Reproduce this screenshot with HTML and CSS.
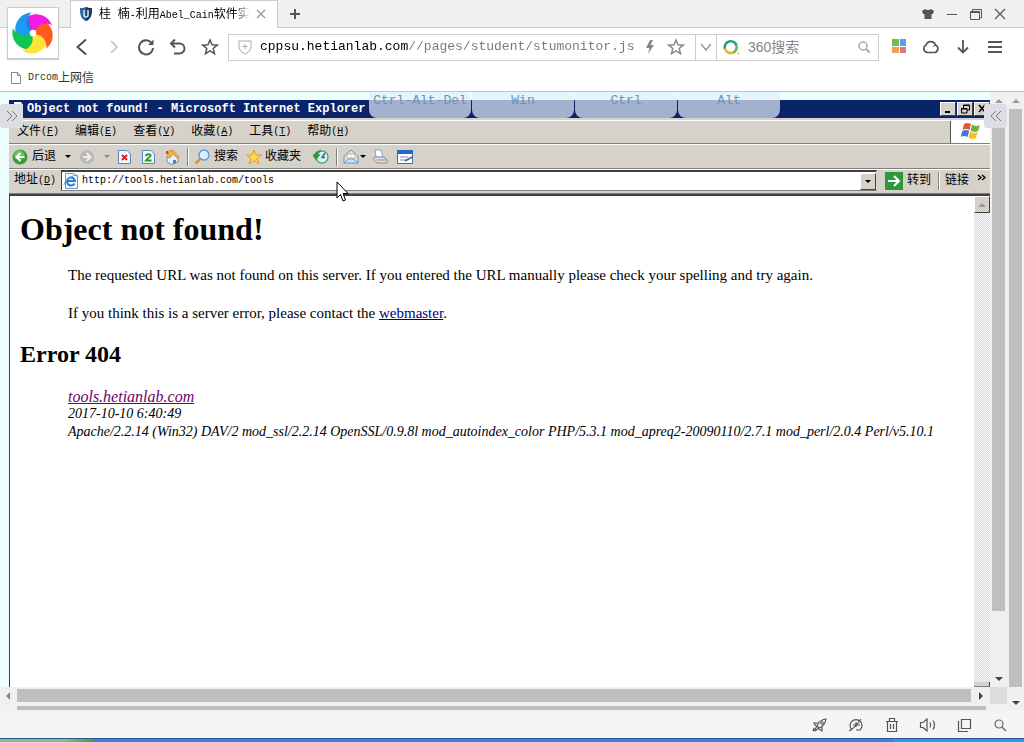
FILE: index.html
```html
<!DOCTYPE html>
<html lang="zh-CN">
<head>
<meta charset="utf-8">
<title>桂 楠-利用Abel_Cain软件实</title>
<link rel="stylesheet" href="styles.css">
</head>
<body>
<header class="chrome">
  <a class="brand" href="#" aria-label="主页">
    <svg viewBox="0 0 44 44" width="42" height="42">
      <defs><path id="petal" d="M22 22C14 17 12 8 18 4C26 0 38 3 42 14C37 11 28 12 25 19Z"/></defs>
      <use href="#petal" fill="#1c9cf0" transform="rotate(288 22 22)"/>
      <use href="#petal" fill="#10c552" transform="rotate(216 22 22)"/>
      <use href="#petal" fill="#ffe23a" transform="rotate(144 22 22)"/>
      <use href="#petal" fill="#ff5a1f" transform="rotate(72 22 22)"/>
      <use href="#petal" fill="#f01ce0"/>
      <path d="M22 22C14 17 12 8 18 4Q16 12 22 22Z" fill="#1c80e8"/>
      <circle cx="22" cy="22" r="3.500" fill="#fff"/>
    </svg>
  </a>
  <div class="tabs">
    <div class="tab">
      <svg viewBox="0 0 14 16" width="14" height="16"><path d="M7 1C5 2 3 2 1 2C1 9 2 13 7 15C12 13 13 9 13 2C11 2 9 2 7 1Z" fill="#2d6496"/><path d="M7 1C9 2 11 2 13 2C13 9 12 13 7 15Z" fill="#17395f"/><path d="M5 4V9Q5 11 7 11Q9 11 9 9V4" fill="none" stroke="#c8e2f4" stroke-width="1.6"/></svg>
      <span class="tab-title">桂&nbsp; 楠<span class="latin">-</span>利用<span class="latin">Abel_Cain</span>软件实</span>
      <button class="plain" aria-label="关闭标签"><svg viewBox="3 3 10 10" width="10" height="10"><path d="M4 4L12 12M12 4L4 12" stroke="#999" stroke-width="1.3"/></svg></button>
    </div>
    <button class="plain newtab" aria-label="新标签"><svg viewBox="0 0 16 16" width="16" height="16"><path d="M8 3V13M3 8H13" stroke="#555" stroke-width="2"/></svg></button>
    <div class="wincontrols">
      <button class="plain" aria-label="皮肤"><svg viewBox="0 0 16 16" width="16" height="16"><path d="M5 3Q8 5 11 3L14 5L13 8H11.500V13H4.500V8H3L2 5Z" fill="#555"/></svg></button>
      <button class="plain" aria-label="最小化"><svg viewBox="0 0 16 16" width="16" height="16"><path d="M3 8.500H13" stroke="#555"/></svg></button>
      <button class="plain" aria-label="还原"><svg viewBox="0 0 16 16" width="16" height="16"><path d="M4.500 5V3.500H13.500V12H12M2.500 5.500H11.500V13.500H2.500ZM2.500 6.500H11.500" fill="none" stroke="#555"/></svg></button>
      <button class="plain" aria-label="关闭"><svg viewBox="0 0 16 16" width="16" height="16"><path d="M3 3L13 13M13 3L3 13" stroke="#555" stroke-width="1.200"/></svg></button>
    </div>
  </div>
  <div class="navbar">
    <div class="navbuttons">
      <button class="plain" aria-label="后退"><svg viewBox="0 0 18 18" width="18" height="18"><path d="M13 1.500L4.500 9L13 16.500" fill="none" stroke="#444" stroke-width="1.800"/></svg></button>
      <button class="plain" aria-label="前进"><svg viewBox="0 0 18 18" width="18" height="18"><path d="M6 3L12 9L6 15" fill="none" stroke="#c4c4c4" stroke-width="1.600"/></svg></button>
      <button class="plain" aria-label="刷新"><svg viewBox="0 0 18 18" width="18" height="18"><path d="M14.500 5A7 7 0 1 0 16 10" fill="none" stroke="#555" stroke-width="2"/><path d="M16.500 1.500V7H11Z" fill="#555"/></svg></button>
      <button class="plain" aria-label="撤销"><svg viewBox="0 0 18 18" width="18" height="18"><path d="M6 1.500L2 5.500L6 9.500M2.500 5.500H10.500A5 5 0 0 1 10.500 15.500H5" fill="none" stroke="#555" stroke-width="2"/></svg></button>
      <button class="plain" aria-label="收藏"><svg viewBox="0 0 18 18" width="18" height="18"><path d="M9 2L11 6.800L16.200 7.200L12.200 10.500L13.500 15.600L9 12.800L4.500 15.600L5.800 10.500L1.800 7.200L7 6.800Z" fill="none" stroke="#555" stroke-width="1.500"/></svg></button>
    </div>
    <div class="omnibox">
      <svg viewBox="0 0 14 16" width="14" height="16"><path d="M1 2H13V9Q12 13 7 15Q2 13 1 9Z" fill="none" stroke="#aaa"/><path d="M7 5V10M4.500 7.500H9.500" stroke="#aaa"/></svg>
      <input class="url" type="text" aria-label="网址" value="cppsu.hetianlab.com//pages/student/stumonitor.js">
      <svg viewBox="0 0 10 14" width="10" height="14"><path d="M5 0L1 8H4.500L3 14L9 5H5.500L8 0Z" fill="#888"/></svg>
      <button class="plain fav" aria-label="收藏网页"><svg viewBox="0 0 18 18" width="18" height="18"><path d="M9 2L11 6.800L16.200 7.200L12.200 10.500L13.500 15.600L9 12.800L4.500 15.600L5.800 10.500L1.800 7.200L7 6.800Z" fill="none" stroke="#888" stroke-width="1.500"/></svg></button>
      <button class="plain drop" aria-label="历史网址"><svg viewBox="0 0 14 14" width="14" height="14"><path d="M2 4L7 10L12 4" fill="none" stroke="#999" stroke-width="1.500"/></svg></button>
      <div class="search">
        <svg viewBox="0 0 17 16" width="17" height="16"><path d="M2 10A6 6 0 0 1 13.500 6.500" fill="none" stroke="#2e9e78" stroke-width="2.600"/><path d="M13.500 6.500A6 6 0 0 1 9 14" fill="none" stroke="#5cb85c" stroke-width="2.600"/><path d="M2 9.500A6 6 0 0 0 10.500 13.500" fill="none" stroke="#f0b030" stroke-width="2.600"/><circle cx="15.500" cy="14.500" r="1" fill="#f0b030"/></svg>
        <input type="text" aria-label="搜索" placeholder="360搜索">
        <button class="plain" aria-label="搜索"><svg viewBox="0 0 14 14" width="14" height="14"><circle cx="6" cy="6" r="4" fill="none" stroke="#aaa" stroke-width="1.500"/><path d="M9 9L12.500 12.500" stroke="#aaa" stroke-width="2"/></svg></button>
      </div>
    </div>
    <div class="tools">
      <button class="plain" aria-label="应用"><svg viewBox="0 0 16 16" width="16" height="16"><path d="M1 0H8V7H1Z" fill="#6fbf4a"/><path d="M9 0H15V7H9Z" fill="#5c9cf5"/><path d="M1 8H8V14H1Z" fill="#f0a050"/><path d="M9 8H15V14H9Z" fill="#d87878"/></svg></button>
      <button class="plain" aria-label="云"><svg viewBox="0 0 16 16" width="16" height="16"><path d="M4.500 13.500A4 4 0 0 1 3 6A5 5 0 0 1 12.500 6A4 4 0 0 1 12 13.500Z" fill="none" stroke="#555" stroke-width="1.700"/><path d="M10 8Q11 6 13 6" fill="none" stroke="#555"/></svg></button>
      <button class="plain" aria-label="下载"><svg viewBox="0 0 16 16" width="16" height="16"><path d="M8 1V13M3 8.500L8 13.500L13 8.500" fill="none" stroke="#555" stroke-width="1.800"/></svg></button>
      <button class="plain" aria-label="菜单"><svg viewBox="0 0 16 16" width="16" height="16"><path d="M1 3H15M1 8H15M1 13H15" stroke="#555" stroke-width="2"/></svg></button>
    </div>
  </div>
  <nav class="bookmarks">
    <a href="#"><svg viewBox="0 0 12 14" width="12" height="14"><path d="M1.500 1.500H7.500L10.500 4.500V12.500H1.500ZM7.500 1.500V4.500H10.500" fill="#fff" stroke="#888"/></svg><span class="latin">Drcom</span>上网信</a>
  </nav>
</header>

<main class="viewport">
  <div class="remote">
    <div class="screen-row">
      <section class="ie">
        <div class="ie-title"><svg viewBox="0 0 14 14" width="14" height="14"><path d="M1 0H8L10 3V14H1Z" fill="#fff"/><path d="M3 4H8M3 7H9" stroke="#4a80d0"/></svg><span>Object not found! - Microsoft Internet Explorer</span>
          <div class="ie-controls">
            <button aria-label="最小化"><svg viewBox="0 0 12 10" width="12" height="10"><path d="M3 8H8" stroke="#000" stroke-width="2"/></svg></button>
            <button aria-label="还原"><svg viewBox="0 0 12 10" width="12" height="10"><path d="M4.500 4V1H10.500V6H8M2.500 4.500H8V9H2.500ZM4 1.500H10.500M2.500 5H8" fill="none" stroke="#000"/></svg></button>
            <button aria-label="关闭"><svg viewBox="0 0 12 10" width="12" height="10"><path d="M3 1L9 8M9 1L3 8" stroke="#000" stroke-width="1.600"/></svg></button>
          </div>
        </div>
        <div class="ie-menu">
          <button>文件<span class="latin">(<u>F</u>)</span></button><button>编辑<span class="latin">(<u>E</u>)</span></button><button>查看<span class="latin">(<u>V</u>)</span></button><button>收藏<span class="latin">(<u>A</u>)</span></button><button>工具<span class="latin">(<u>T</u>)</span></button><button>帮助<span class="latin">(<u>H</u>)</span></button>
          <div class="flag"><svg viewBox="0 0 22 20" width="22" height="20"><path d="M4 3Q7 1 11 3L9.500 9Q6 7 2.500 9Z" fill="#e8562c"/><path d="M12 3.500Q16 6 20 4L18 10Q14 12 10.500 9.500Z" fill="#6cb33e"/><path d="M2.200 10Q6 8 9.200 10L7.500 16Q4 14 .8 16Z" fill="#3c7cd8"/><path d="M10.200 10.500Q14 13 17.800 11L16 17Q12 19 8.600 16.500Z" fill="#f8c020"/></svg></div>
        </div>
        <div class="ie-tools">
          <button><svg viewBox="0 0 16 16" width="16" height="16"><circle cx="8" cy="8" r="7.500" fill="#35a235"/><circle cx="7" cy="6" r="5" fill="#66c45a"/><path d="M8.500 4L4.500 8L8.500 12M5 8H12.500" fill="none" stroke="#fff" stroke-width="2"/></svg><span>后退</span><i class="caret"></i></button>
          <button aria-label="前进" class="gap-s"><svg viewBox="0 0 16 16" width="16" height="16"><circle cx="8" cy="8" r="7" fill="#b9b9b9"/><path d="M7.500 4L11.500 8L7.500 12M11 8H4" fill="none" stroke="#eee" stroke-width="2"/></svg><i class="caret dim"></i></button>
          <button aria-label="停止" class="gap-xs"><svg viewBox="0 0 16 16" width="16" height="16"><path d="M2.500 1.500H11L14.500 5V14.500H2.500Z" fill="#f2f8ff" stroke="#5a86c0"/><path d="M6 6L11 11M11 6L6 11" stroke="#d22" stroke-width="2"/></svg></button>
          <button aria-label="刷新" class="gap-s"><svg viewBox="0 0 16 16" width="16" height="16"><path d="M2.500 1.500H11L14.500 5V14.500H2.500Z" fill="#f2f8ff" stroke="#5a86c0"/><path d="M5.500 7Q7 4.500 10 5.500Q12 7 8 9L6 11.500H11.500" fill="none" stroke="#239623" stroke-width="1.800"/></svg></button>
          <button aria-label="主页" class="gap-s"><svg viewBox="0 0 16 16" width="16" height="16"><path d="M3 8V13L8 15.500L14 13V8L9 3Z" fill="#e6f0fc" stroke="#7890b0"/><path d="M3 8L5 2L9 1L15 8L13 9L9 5L6 9Z" fill="#eeb04a" stroke="#c07a28" stroke-width=".6"/><path d="M9 11H12V14L9 15Z" fill="#4a80d0"/><path d="M2 2H4V5H2Z" fill="#c44"/></svg></button>
          <i class="sep"></i>
          <button><svg viewBox="0 0 16 16" width="16" height="16"><path d="M7 9L1.500 14.500" stroke="#e0903c" stroke-width="2.500"/><circle cx="10" cy="6" r="5" fill="#d8f0ff" stroke="#5a9ad8" stroke-width="1.400"/></svg><span>搜索</span></button>
          <button class="gap-s"><svg viewBox="0 0 16 16" width="16" height="16"><path d="M8 1L10 6H15.500L11 9.500L13 15L8 11.500L3 15L5 9.500L.5 6H6Z" fill="#ffd848" stroke="#e0a020"/></svg><span class="tight">收藏夹</span></button>
          <button aria-label="历史" class="gap-m"><svg viewBox="0 0 16 16" width="16" height="16"><circle cx="9" cy="8" r="6" fill="#dff0e8" stroke="#5aa0a0" stroke-width="1.400"/><path d="M12 4L9 8.500H12" fill="none" stroke="#2a6a8a" stroke-width="1.400"/><path d="M8 2Q2 2 2 8M0 6L3 10L6 6Z" fill="#2a9a3a" stroke="#2a9a3a" stroke-width="1.600"/></svg></button>
          <i class="sep"></i>
          <button aria-label="邮件"><svg viewBox="0 0 16 16" width="16" height="16"><path d="M1 7L8 1L15 7V14H1Z" fill="#cfe4fa" stroke="#6a94c4"/><path d="M4 5H12V9L8 11L4 9Z" fill="#fff8e0" stroke="#d8b070"/><path d="M1 14L7 9H9L15 14" fill="none" stroke="#6a94c4"/></svg><i class="caret near"></i></button>
          <button aria-label="打印" class="gap-xs"><svg viewBox="0 0 16 16" width="16" height="16"><path d="M4 8L3 1H9L11 8Z" fill="#fff" stroke="#90a0c0"/><path d="M2 8H12L15 11V14H5L2 11Z" fill="#dcdce8" stroke="#8890a8"/><path d="M5 11H14" stroke="#c08848"/></svg></button>
          <button aria-label="编辑" class="gap-s"><svg viewBox="0 0 18 16" width="18" height="16"><path d="M1.500 1.500H16.500V14.500H1.500Z" fill="#fff" stroke="#3070c0"/><path d="M1 1H17V5H1Z" fill="#2868c0"/><path d="M4 8H12M4 11H10" stroke="#5a90d0"/><path d="M9 12L16 8" stroke="#666" stroke-width="2"/></svg></button>
        </div>
        <div class="ie-address">
          <label for="ie-url">地址<span class="latin">(<u>D</u>)</span></label>
          <div class="ie-field">
            <svg viewBox="0 0 16 16" width="16" height="16"><path d="M2.500.5H11L14.500 4V15.500H2.500Z" fill="#f4f9ff" stroke="#6f93c5"/><path d="M11.500 10.500A4 4 0 1 1 12 8H4.500" fill="none" stroke="#2d7ad0" stroke-width="2"/><path d="M1 12Q1 8 8 4T15 4" fill="none" stroke="#4a9ae0"/></svg>
            <input id="ie-url" type="text" value="http://tools.hetianlab.com/tools">
            <button aria-label="展开"><i class="caret"></i></button>
          </div>
          <button class="go"><svg viewBox="0 0 18 18" width="18" height="18"><path d="M0 0H18V18H0Z" fill="#2f9838"/><path d="M9 4L14 9L9 14M13 9H3" fill="none" stroke="#fff" stroke-width="2"/></svg><span>转到</span></button>
          <i class="sep"></i>
          <button class="links">链接</button>
          <svg class="more" viewBox="0 0 10 8" width="10" height="8"><path d="M1 1L4 3.500L1 6M5 1L8 3.500L5 6" fill="none" stroke="#000" stroke-width="1.300"/></svg>
        </div>
        <div class="ie-body">
          <article class="page">
            <h1>Object not found!</h1>
            <p>The requested URL was not found on this server. If you entered the URL manually please check your spelling and try again.</p>
            <p>If you think this is a server error, please contact the <a href="#">webmaster</a>.</p>
            <h2>Error 404</h2>
            <address><a class="visited" href="#">tools.hetianlab.com</a><span>2017-10-10 6:40:49</span><span>Apache/2.2.14 (Win32) DAV/2 mod_ssl/2.2.14 OpenSSL/0.9.8l mod_autoindex_color PHP/5.3.1 mod_apreq2-20090110/2.7.1 mod_perl/2.0.4 Perl/v5.10.1</span></address>
          </article>
          <div class="ie-scroll"><button aria-label="向上"><i class="tri up dim"></i></button><i class="stub"></i></div>
        </div>
      </section>
      <div class="vscroll inner"><i class="tri up dim"></i><i class="thumb"></i><i class="tri down"></i></div>
    </div>
    <div class="hscroll"><i class="tri left"></i><i class="thumb"></i><i class="tri right"></i><i class="corner"></i></div>
    <div class="hscroll cut"><i class="thumb"></i></div>
  </div>
  <div class="vscroll outer"><i class="tri up dim"></i><i class="thumb"></i><i class="tri down"></i></div>

  <div class="keys"><button>Ctrl-Alt-Del</button><button>Win</button><button>Ctrl</button><button>Alt</button></div>
  <button class="handle left-handle" aria-label="展开左侧"><svg viewBox="0 0 14 14" width="14" height="14"><path d="M2 2L7 7L2 12M7 2L12 7L7 12" fill="none" stroke="#777"/></svg></button>
  <button class="handle right-handle" aria-label="展开右侧"><svg viewBox="0 0 14 14" width="14" height="14"><path d="M7 2L2 7L7 12M12 2L7 7L12 12" fill="none" stroke="#777"/></svg></button>
  <svg class="pointer" viewBox="0 0 13 21" width="13" height="21"><path d="M1 1V17L4.500 13.500L7 20L9.500 19L7 12.500H12Z" fill="#fff" stroke="#000"/></svg>
</main>

<footer class="status">
  <button class="plain" aria-label="加速"><svg viewBox="0 0 16 16" width="16" height="16"><path d="M5 9Q7 3 14 2Q13 9 7 11ZM6 6L2 6L4 9M10 10V14L7 12M5 9L2 14M7 11L3 14M2 11L1 14" fill="none" stroke="#555" stroke-width="1.200"/><circle cx="10" cy="6" r="1.300" fill="none" stroke="#555"/></svg></button>
  <button class="plain" aria-label="网速"><svg viewBox="0 0 16 16" width="16" height="16"><path d="M4 13A6 6 0 1 1 12 13H8M1 14Q7 11 13 2M5 8H12M8 5V10" fill="none" stroke="#555" stroke-width="1.200"/></svg></button>
  <button class="plain" aria-label="清理"><svg viewBox="0 0 16 16" width="16" height="16"><path d="M2 4.500H14M5.500 4V1.500H10.500V4M3.500 5V14.500H12.500V5M6.500 7V12M9.500 7V12" fill="none" stroke="#555" stroke-width="1.200"/></svg></button>
  <button class="plain" aria-label="声音"><svg viewBox="0 0 18 16" width="18" height="16"><path d="M1.500 5.500H4L8 2V14L4 10.500H1.500ZM11 5.500Q12.500 8 11 10.500M14 3.500Q17 8 14 12.500" fill="none" stroke="#555" stroke-width="1.200"/></svg></button>
  <button class="plain" aria-label="窗口"><svg viewBox="0 0 16 16" width="16" height="16"><path d="M5.500 2.500H14.500V11.500H5.500ZM2.500 4V14.500H12" fill="none" stroke="#555" stroke-width="1.200"/></svg></button>
  <button class="plain" aria-label="缩放"><svg viewBox="0 0 16 16" width="16" height="16"><circle cx="7" cy="7" r="4" fill="none" stroke="#666" stroke-width="1.200"/><path d="M10 10L14 14" stroke="#666" stroke-width="1.500"/></svg></button>
</footer>
<div class="taskbar"><i class="start"></i><i class="running"></i><i class="tray"></i></div>
</body>
</html>
```
FILE: styles.css
```css
* { box-sizing: border-box; }
html, body { height: 100%; }
body {
  margin: 0;
  display: flex;
  flex-direction: column;
  overflow: hidden;
  background: #fff;
  color: #000;
  font: 12px/16px "Liberation Sans", "Noto Sans CJK SC", sans-serif;
}
svg { display: block; flex: none; }
i { display: block; flex: none; }
button, input { font: inherit; color: inherit; margin: 0; padding: 0; }
button { background: none; border: 0; white-space: nowrap; flex: none; }
input { border: 0; outline: 0; background: none; min-width: 0; }
.plain { display: flex; align-items: center; justify-content: center; }
.latin { font-family: "Liberation Mono", monospace; font-size: 10px; }

/* browser chrome */
.chrome { position: relative; flex: none; border-bottom: 1px solid #b8c8d0; }
.brand {
  position: absolute;
  left: 7px;
  top: 7px;
  padding: 4px;
  background: #fff;
  border: 1px solid #ccc;
  box-shadow: 0 1px 1px #ccc;
}
.tabs {
  display: flex;
  align-items: center;
  height: 28px;
  padding-left: 70px;
  background: #f0f0f0;
  border-bottom: 1px solid #ccc;
}
.tab {
  display: flex;
  align-items: center;
  gap: 6px;
  width: 208px;
  height: 28px;
  padding: 0 11px 0 8px;
  background: #fff;
  border: 1px solid #ccc;
  border-bottom: 0;
}
.tab-title {
  flex: 1;
  padding-top: 1px;
  white-space: nowrap;
  -webkit-mask-image: linear-gradient(90deg, #000 90%, transparent);
  mask-image: linear-gradient(90deg, #000 90%, transparent);
}
.newtab { margin-left: 9px; }
.wincontrols { display: flex; gap: 8px; margin-left: auto; padding-right: 16px; }
.navbar { display: flex; align-items: center; height: 38px; padding: 0 21px 0 73px; }
.navbuttons { display: flex; gap: 14px; width: 155px; flex: none; }
.omnibox {
  display: flex;
  align-items: center;
  flex: 1;
  height: 27px;
  min-width: 0;
  padding-left: 9px;
  border: 1px solid #ccc;
}
.url {
  flex: 1;
  margin: 0 5px 0 8px;
  height: 20px;
  font: 13px/20px "Liberation Mono", monospace;
  color: #777;
  background: linear-gradient(90deg, #000 148px, #777 148px);
  -webkit-background-clip: text;
  background-clip: text;
  -webkit-text-fill-color: transparent;
}
.fav { margin: 0 10px 0 12px; }
.drop { align-self: stretch; width: 22px; border: 1px solid #ccc; border-width: 0 1px; }
.search { display: flex; align-items: center; gap: 8px; width: 161px; padding: 0 7px 0 6px; }
.search input { flex: 1; font-size: 14px; }
.search input::placeholder { color: #888; opacity: 1; }
.tools { display: flex; gap: 16px; margin-left: 12px; }
.bookmarks { height: 25px; padding: 4px 10px; }
.bookmarks a { display: flex; align-items: center; color: #333; text-decoration: none; }
.bookmarks svg { margin-right: 6px; }

/* remote desktop view */
.viewport { position: relative; display: flex; flex: 1; min-height: 0; background: #efffff; }
.remote { display: flex; flex-direction: column; flex: 1; min-width: 0; }
.screen-row { display: flex; flex: 1; min-height: 0; }
.ie {
  display: flex;
  flex-direction: column;
  flex: 1;
  min-width: 0;
  margin: 8px 0 0 9px;
  background: #d6d2ca;
  font-family: "Liberation Mono", "Noto Sans CJK SC", monospace;
}
.ie button { display: flex; align-items: center; }
.ie-title {
  display: flex;
  align-items: center;
  height: 18px;
  background: #0a246a;
  color: #fff;
  font-weight: bold;
  white-space: nowrap;
  padding-left: 4px;
}
.ie-controls { display: flex; gap: 1px; margin-left: auto; }
.ie-controls button {
  padding: 1px;
  background: #d6d2ca;
  border: 1px solid;
  border-color: #fff #404040 #404040 #fff;
}
.ie-menu {
  display: flex;
  align-items: center;
  gap: 16px;
  height: 24px;
  margin-top: 2px;
  padding-left: 8px;
  border-top: 1px solid #fff;
  border-bottom: 1px solid #808080;
}
.flag {
  display: flex;
  justify-content: center;
  align-self: stretch;
  width: 40px;
  margin-left: auto;
  background: #fff;
  border-left: 1px solid #555;
}
.ie-tools {
  display: flex;
  align-items: center;
  height: 25px;
  padding-left: 3px;
  border-top: 1px solid #fff;
  border-bottom: 1px solid #808080;
}
.ie-tools span { margin-left: 4px; }
.ie-tools .tight { margin-left: 3px; }
.gap-xs { margin-left: 6px; }
.gap-s { margin-left: 8px; }
.gap-m { margin-left: 12px; }
.caret {
  margin-left: 9px;
  border: 3px solid transparent;
  border-top-color: #000;
  border-bottom: 0;
}
.caret.dim { border-top-color: #888; }
.caret.near { margin-left: 1px; }
.sep { width: 2px; height: 18px; margin: 0 5px 0 7px; border-left: 1px solid #808080; border-right: 1px solid #fff; }
.ie-address {
  display: flex;
  align-items: center;
  height: 25px;
  padding: 0 3px 2px 5px;
  border-top: 1px solid #fff;
  border-bottom: 1px solid #808080;
}
.ie-address label { width: 47px; flex: none; white-space: nowrap; }
.ie-field {
  display: flex;
  align-items: center;
  gap: 3px;
  flex: 1;
  min-width: 0;
  height: 21px;
  padding-left: 1px;
  background: #fff;
  border: 1px solid;
  border-color: #404040 #d6d2ca #808080 #404040;
  border-top-width: 2px;
}
.ie-field input { flex: 1; font-size: 10px; }
.ie-field button, .ie-scroll button {
  justify-content: center;
  width: 16px;
  height: 17px;
  background: #d6d2ca;
  border: 1px solid;
  border-color: #fff #404040 #404040 #fff;
}
.ie-field .caret { margin: 0; }
.go { gap: 4px; margin-left: 8px; }
.links { width: 32px; }
.more { align-self: flex-start; margin-top: 4px; }
.ie-body {
  display: flex;
  flex: 1;
  min-height: 0;
  background: #fff;
  border-top: 2px solid #404040;
  border-left: 1px solid #404040;
}
.ie-scroll {
  display: flex;
  flex-direction: column;
  justify-content: space-between;
  width: 16px;
  background: repeating-conic-gradient(#d6d2ca 0 25%, #fff 0 50%) 0 0 / 2px 2px;
}
.stub { height: 5px; background: #d6d2ca; border-right: 1px solid #404040; border-bottom: 1px solid #808080; }

/* error page */
.page { flex: 1; min-width: 0; padding: 0 10px; font: 15px/19px "Liberation Serif", serif; }
.page h1 { margin: 14px 0 18px; font-size: 32px; line-height: 38px; }
.page p { margin: 0 0 19px 48px; }
.page h2 { margin: -2px 0 20px; font-size: 24px; line-height: 28px; }
.page a { color: #00007a; }
.page address { display: flex; flex-direction: column; align-items: flex-start; margin-left: 48px; font-size: 16px; line-height: 17px; white-space: nowrap; }
.page address span { font-size: 14px; line-height: 18px; }
.page a.visited { color: #700070; }

/* scrollbars */
.vscroll { display: flex; flex-direction: column; align-items: center; width: 17px; flex: none; padding: 7px 0 6px; background: #f0f0f0; }
.vscroll .thumb { width: 13px; flex: 1; margin: 6px 0 14px; background: #bfbfbf; }
.vscroll.inner .thumb { margin-bottom: 66px; }
.tri { border: 4px solid transparent; }
.tri.up { border-bottom-color: #444; border-top: 0; }
.tri.up.dim { border-bottom-color: #999; }
.tri.down { border-top-color: #444; border-bottom: 0; }
.tri.left { border-right-color: #888; border-left: 0; }
.tri.right { border-left-color: #444; border-right: 0; }
.hscroll { display: flex; align-items: center; height: 17px; flex: none; padding-left: 6px; background: #f0f0f0; }
.hscroll .thumb { flex: 1; height: 13px; margin: 0 8px 0 7px; background: #bfbfbf; }
.corner { width: 17px; align-self: stretch; margin-left: 7px; background: #dcdcdc; }
.hscroll.cut { height: 7px; padding: 0 13px 0 10px; }
.hscroll.cut .thumb { height: 4px; }

/* remote control overlays */
.keys { position: absolute; left: 369px; top: 0; display: flex; gap: 1px; }
.keys button {
  width: 102px;
  height: 26px;
  padding-bottom: 9px;
  font: 13px/16px "Liberation Mono", monospace;
  color: #6c94b4;
  background: rgba(225, 238, 250, .7);
  border-radius: 0 0 8px 8px;
}
.handle {
  position: absolute;
  top: 12px;
  display: flex;
  align-items: center;
  justify-content: center;
  width: 23px;
  height: 24px;
  background: #dcdee4;
  border-radius: 3px;
}
.left-handle { left: 0; }
.right-handle { right: 17px; }
.pointer { position: absolute; left: 336px; top: 89px; }

/* browser status bar and desktop taskbar */
.status { display: flex; align-items: center; justify-content: flex-end; gap: 20px; height: 27px; flex: none; padding-right: 16px; background: #f5f5f5; }
.status .plain { width: 16px; }
.taskbar { display: flex; height: 4px; flex: none; border-top: 1px solid #2a5a8a; }
.start { width: 94px; background: linear-gradient(90deg, #8ab88a 70%, #3fa03f); }
.running { flex: 1; background: #3c7cec; }
.tray { width: 131px; background: #18a4f4; }
```
